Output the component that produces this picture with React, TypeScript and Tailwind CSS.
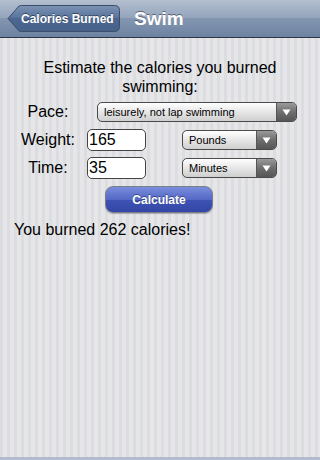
import React from "react";

function Select({ label, width }: { label: string; width: string }) {
  return (
    <div
      className={`${width} h-[20px] flex items-stretch rounded-[5px] border border-[#4a4a4a] overflow-hidden bg-[linear-gradient(to_bottom,#ffffff,#e6e6e6_50%,#cfcfcf)]`}
    >
      <div className="flex-1 flex items-center pl-[6px] text-[11px] text-black leading-none">{label}</div>
      <div className="w-[20px] flex items-center justify-center border-l border-[#555] bg-[linear-gradient(to_bottom,#9a9a9a,#6e6e6e_50%,#555555)]">
        <svg width="9" height="7" viewBox="0 0 9 7">
          <path d="M0.5 0.5 L8.5 0.5 L4.5 6.5 Z" fill="#ffffff" />
        </svg>
      </div>
    </div>
  );
}

function Input({ value }: { value: string }) {
  return (
    <div className="w-[59px] h-[22px] rounded-[5px] border border-[#444] bg-white flex items-center pl-[1px] text-[16px] text-black leading-none">
      {value}
    </div>
  );
}

export default function App() {
  return (
    <div
      className="w-[320px] h-[460px] flex flex-col overflow-hidden"
      style={{ fontFamily: '"Liberation Sans", Arial, sans-serif' }}
    >
      <div className="h-[38px] shrink-0 flex items-center border-b border-[#2d3642] bg-[linear-gradient(to_bottom,#b4bfd0,#92a3bb_50%,#8396b0_50%,#6e83a2)] pl-[7px]">
        <div className="relative w-[113px] h-[27px] flex items-center">
          <svg className="absolute inset-0" width="113" height="27" viewBox="0 0 113 27">
            <defs>
              <linearGradient id="bb" x1="0" y1="0" x2="0" y2="1">
                <stop offset="0" stopColor="#7d93b5" />
                <stop offset="0.5" stopColor="#56719a" />
                <stop offset="0.5" stopColor="#4b6690" />
                <stop offset="1" stopColor="#476289" />
              </linearGradient>
            </defs>
            <path
              d="M1 13.5 L12 1 Q13 0.5 14.5 0.5 L107.5 0.5 Q112.5 0.5 112.5 5.5 L112.5 21.5 Q112.5 26.5 107.5 26.5 L14.5 26.5 Q13 26.5 12 26 Z"
              fill="url(#bb)"
              stroke="#3a4d6b"
              strokeWidth="1"
            />
          </svg>
          <span className="relative pl-[14px] text-[12px] font-bold text-white leading-none [text-shadow:0_-1px_0_rgba(0,0,0,0.45)]">
            Calories Burned
          </span>
        </div>
        <span className="ml-[14px] text-[19px] font-bold text-white leading-none [text-shadow:0_-1px_0_rgba(0,0,0,0.45)]">
          Swim
        </span>
      </div>

      <div className="flex-1 flex flex-col bg-[repeating-linear-gradient(90deg,#dcdde0_0px,#dcdde0_3px,#e6e6e9_3px,#e6e6e9_7px)]">
        <div className="pt-[20px] text-center text-[16px] leading-[19px] text-black">
          Estimate the calories you burned
          <br />
          swimming:
        </div>

        <div className="mt-[6px] h-[20px] flex items-center pl-[20px]">
          <div className="w-[56px] text-center text-[16px] text-black">Pace:</div>
          <div className="ml-[21px]">
            <Select label="leisurely, not lap swimming" width="w-[200px]" />
          </div>
        </div>

        <div className="mt-[7px] h-[22px] flex items-center pl-[20px]">
          <div className="w-[56px] text-center text-[16px] text-black">Weight:</div>
          <div className="ml-[11px]">
            <Input value="165" />
          </div>
          <div className="ml-[36px]">
            <Select label="Pounds" width="w-[95px]" />
          </div>
        </div>

        <div className="mt-[6px] h-[22px] flex items-center pl-[20px]">
          <div className="w-[56px] text-center text-[16px] text-black">Time:</div>
          <div className="ml-[11px]">
            <Input value="35" />
          </div>
          <div className="ml-[36px]">
            <Select label="Minutes" width="w-[95px]" />
          </div>
        </div>

        <div className="mt-[7px] flex pl-[105px]">
          <div className="w-[108px] h-[27px] rounded-[8px] border border-[#7a7f8c] flex items-center justify-center bg-[linear-gradient(to_bottom,#7a8ddb,#5468c6_50%,#3f53b5_50%,#3447a6)] text-white text-[12px] font-bold [text-shadow:0_-1px_0_rgba(0,0,0,0.4)] shadow-[0_1px_1px_rgba(0,0,0,0.25)]">
            Calculate
          </div>
        </div>

        <div className="mt-[7px] pl-[14px] text-[16px] leading-[19px] text-black">You burned 262 calories!</div>
      </div>

      <div className="h-[3px] shrink-0 bg-[#b3bbcf]" />
    </div>
  );
}
